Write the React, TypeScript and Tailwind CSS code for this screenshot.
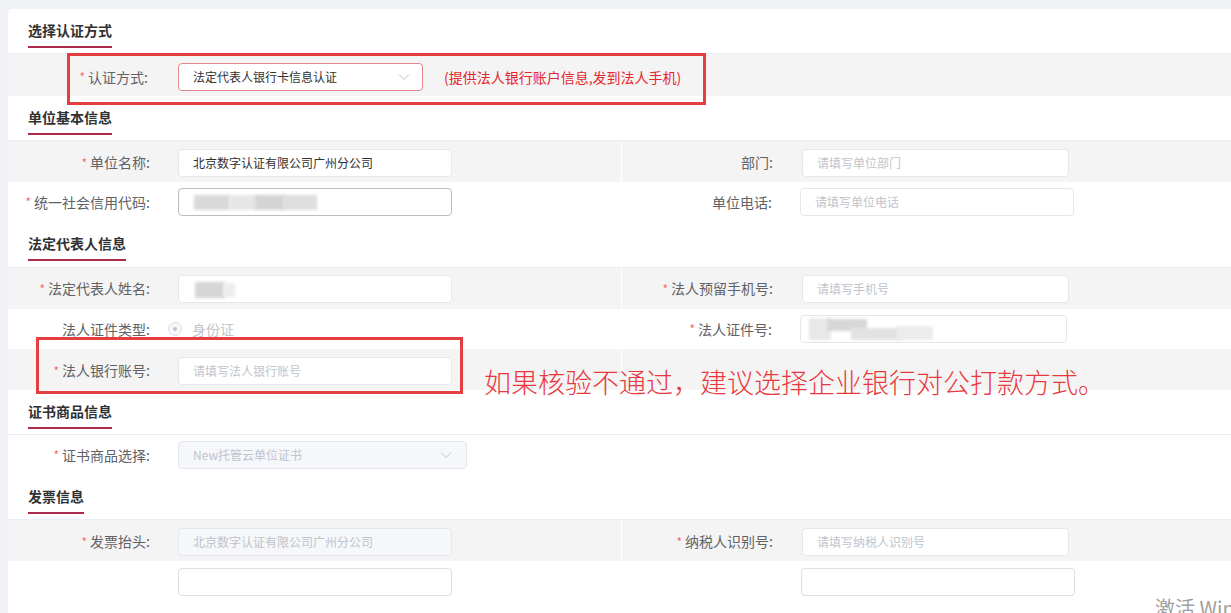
import React from 'react';

const FONT = "font-['Noto_Sans_CJK_SC','Microsoft_YaHei',sans-serif]";

const SectionTitle: React.FC<{ title: string; className?: string }> = ({ title, className = 'h-[45px]' }) => (
  <div className={`${className} border-b border-[#ebeef5] pl-[20px]`}>
    <div className="inline-block pt-[12px]">
      <div className="text-[14px] leading-[18px] font-bold text-[#303133]">{title}</div>
      <div className="mt-[7px] h-[2px] bg-[#ad2a4d]" />
    </div>
  </div>
);

const Label: React.FC<{ text: string; required?: boolean; className: string }> = ({ text, required, className }) => (
  <div className={`${className} flex shrink-0 items-center justify-end text-[14px] text-[#606266]`}>
    {required && <span className="mr-[3px] text-[12px] text-[#f56c6c]">*</span>}
    <span>{text}:</span>
  </div>
);

const Chevron: React.FC = () => (
  <svg width="12" height="8" viewBox="0 0 12 8" fill="none" className="shrink-0">
    <path d="M1 1.5 L6 6.5 L11 1.5" stroke="#c0c4cc" strokeWidth="1" />
  </svg>
);

const Blur: React.FC<{ className: string }> = ({ className }) => (
  <div className={`absolute ${className} blur-[1.5px]`} />
);

const App: React.FC = () => {
  return (
    <div className={`relative h-[613px] overflow-hidden bg-[#f0f2f5] pl-[8px] pt-[9px] ${FONT}`}>
      <div className="min-h-[700px] rounded-tl-[4px] bg-white">
        {/* 选择认证方式 */}
        <SectionTitle title="选择认证方式" />
        <div className="flex h-[42px] items-start bg-[#f5f4f4] pt-[9px]">
          <Label text="认证方式" required className="h-[28px] w-[140px]" />
          <div className="ml-[30px] flex h-[28px] w-[245px] items-center justify-between rounded-[4px] border border-[#e3878c] bg-white pl-[14px] pr-[12px] text-[12px] text-[#303133]">
            <span>法定代表人银行卡信息认证</span>
            <Chevron />
          </div>
          <div className="ml-[21px] h-[28px] leading-[28px] text-[14px] text-[#e5262d]">(提供法人银行账户信息,发到法人手机)</div>
        </div>

        {/* 单位基本信息 */}
        <SectionTitle title="单位基本信息" />
        <div className="flex h-[41px] bg-[#f5f4f4]">
          <div className="flex w-[613px] items-center pt-[2px]">
            <Label text="单位名称" required className="w-[142px]" />
            <div className="ml-[28px] flex h-[28px] w-[274px] items-center rounded-[4px] border border-[#e4e7ed] bg-white px-[14px] text-[12px] text-[#303133]">
              北京数字认证有限公司广州分公司
            </div>
          </div>
          <div className="flex flex-1 items-center border-l border-white pt-[2px]">
            <Label text="部门" className="w-[151px]" />
            <div className="ml-[29px] flex h-[28px] w-[267px] items-center rounded-[4px] border border-[#e4e7ed] bg-white px-[14px] text-[12px] text-[#c0c4cc]">
              请填写单位部门
            </div>
          </div>
        </div>
        <div className="flex h-[40px] bg-white">
          <div className="flex w-[613px] items-center">
            <Label text="统一社会信用代码" required className="w-[142px]" />
            <div className="relative ml-[28px] h-[28px] w-[274px] rounded-[4px] border border-[#b9bcc2] bg-white">
              <Blur className="left-[15px] top-[6px] h-[15px] w-[36px] bg-[#d9d9d9]" />
              <Blur className="left-[50px] top-[6px] h-[15px] w-[28px] bg-[#e6e6e6]" />
              <Blur className="left-[76px] top-[6px] h-[15px] w-[30px] bg-[#d4d4d4]" />
              <Blur className="left-[104px] top-[6px] h-[15px] w-[34px] bg-[#dedede]" />
            </div>
          </div>
          <div className="flex flex-1 items-center">
            <Label text="单位电话" className="w-[151px]" />
            <div className="ml-[28px] flex h-[28px] w-[274px] items-center rounded-[4px] border border-[#e4e7ed] bg-white px-[14px] text-[12px] text-[#c0c4cc]">
              请填写单位电话
            </div>
          </div>
        </div>

        {/* 法定代表人信息 */}
        <SectionTitle title="法定代表人信息" className="h-[46px]" />
        <div className="flex h-[41px] bg-[#f5f4f4]">
          <div className="flex w-[613px] items-center">
            <Label text="法定代表人姓名" required className="w-[142px]" />
            <div className="relative ml-[28px] h-[28px] w-[274px] rounded-[4px] border border-[#e4e7ed] bg-white">
              <Blur className="left-[16px] top-[6px] h-[16px] w-[30px] bg-[#d6d6d6]" />
              <Blur className="left-[44px] top-[7px] h-[14px] w-[12px] bg-[#ededed]" />
            </div>
          </div>
          <div className="flex flex-1 items-center border-l border-white">
            <Label text="法人预留手机号" required className="w-[151px]" />
            <div className="ml-[29px] flex h-[28px] w-[267px] items-center rounded-[4px] border border-[#e4e7ed] bg-white px-[14px] text-[12px] text-[#c0c4cc]">
              请填写手机号
            </div>
          </div>
        </div>
        <div className="flex h-[40px] bg-white">
          <div className="flex w-[613px] items-center">
            <Label text="法人证件类型" className="w-[142px]" />
            <div className="ml-[18px] flex items-center">
              <span className="flex h-[14px] w-[14px] items-center justify-center rounded-full border border-[#dcdfe6] bg-[#f5f7fa]">
                <span className="h-[4px] w-[4px] rounded-full bg-[#c0c4cc]" />
              </span>
              <span className="ml-[10px] text-[14px] text-[#c0c4cc]">身份证</span>
            </div>
          </div>
          <div className="flex flex-1 items-center">
            <Label text="法人证件号" required className="w-[151px]" />
            <div className="relative ml-[28px] h-[28px] w-[267px] rounded-[4px] border border-[#e4e7ed] bg-white">
              <Blur className="left-[8px] top-[2px] h-[22px] w-[22px] bg-[#e8e8e8]" />
              <Blur className="left-[26px] top-[3px] h-[12px] w-[40px] bg-[#d7d7d7]" />
              <Blur className="left-[50px] top-[12px] h-[12px] w-[50px] bg-[#e2e2e2]" />
              <Blur className="left-[96px] top-[10px] h-[14px] w-[36px] bg-[#ececec]" />
            </div>
          </div>
        </div>
        <div className="flex h-[41px] bg-[#f5f4f4]">
          <div className="flex w-[613px] items-center pt-[2px]">
            <Label text="法人银行账号" required className="w-[142px]" />
            <div className="ml-[28px] flex h-[28px] w-[274px] items-center rounded-[4px] border border-[#e4e7ed] bg-white px-[14px] text-[12px] text-[#c0c4cc]">
              请填写法人银行账号
            </div>
          </div>
          <div className="flex-1 border-l border-white" />
        </div>

        {/* 证书商品信息 */}
        <SectionTitle title="证书商品信息" />
        <div className="flex h-[40px] items-center bg-white">
          <Label text="证书商品选择" required className="w-[142px]" />
          <div className="ml-[28px] flex h-[28px] w-[289px] items-center justify-between rounded-[4px] border border-[#e4e7ed] bg-[#f5f7fa] pl-[14px] pr-[14px] text-[12px] text-[#c0c4cc]">
            <span>New托管云单位证书</span>
            <Chevron />
          </div>
        </div>

        {/* 发票信息 */}
        <SectionTitle title="发票信息" />
        <div className="flex h-[41px] bg-[#f5f4f4]">
          <div className="flex w-[613px] items-center pt-[2px]">
            <Label text="发票抬头" required className="w-[142px]" />
            <div className="ml-[28px] flex h-[28px] w-[274px] items-center rounded-[4px] border border-[#e4e7ed] bg-[#f5f7fa] px-[14px] text-[12px] text-[#c0c4cc]">
              北京数字认证有限公司广州分公司
            </div>
          </div>
          <div className="flex flex-1 items-center border-l border-white pt-[2px]">
            <Label text="纳税人识别号" required className="w-[151px]" />
            <div className="ml-[29px] flex h-[28px] w-[267px] items-center rounded-[4px] border border-[#e4e7ed] bg-white px-[14px] text-[12px] text-[#c0c4cc]">
              请填写纳税人识别号
            </div>
          </div>
        </div>
        <div className="flex h-[41px] bg-white">
          <div className="flex w-[613px] items-center">
            <div className="ml-[170px] h-[28px] w-[274px] rounded-[4px] border border-[#dcdfe6] bg-white" />
          </div>
          <div className="flex flex-1 items-center">
            <div className="ml-[180px] h-[28px] w-[274px] rounded-[4px] border border-[#dcdfe6] bg-white" />
          </div>
        </div>
      </div>

      {/* annotations drawn over the screenshot */}
      <div className="pointer-events-none absolute left-[67px] top-[53px] h-[52px] w-[639px] border-[3px] border-[#e53e41]" />
      <div className="pointer-events-none absolute left-[36px] top-[337px] h-[57px] w-[427px] border-[3px] border-[#e53e41]" />
      <div className="pointer-events-none absolute left-[484px] top-[365px] whitespace-nowrap text-[27px] leading-[34px] font-light text-[#e8383d]">
        如果核验不通过，建议选择企业银行对公打款方式。
      </div>
      <div className="pointer-events-none absolute left-[1155px] top-[595px] whitespace-nowrap text-[20px] leading-[26px] text-[#a0a0a0]">
        激活 Windows
      </div>
    </div>
  );
};

export default App;
